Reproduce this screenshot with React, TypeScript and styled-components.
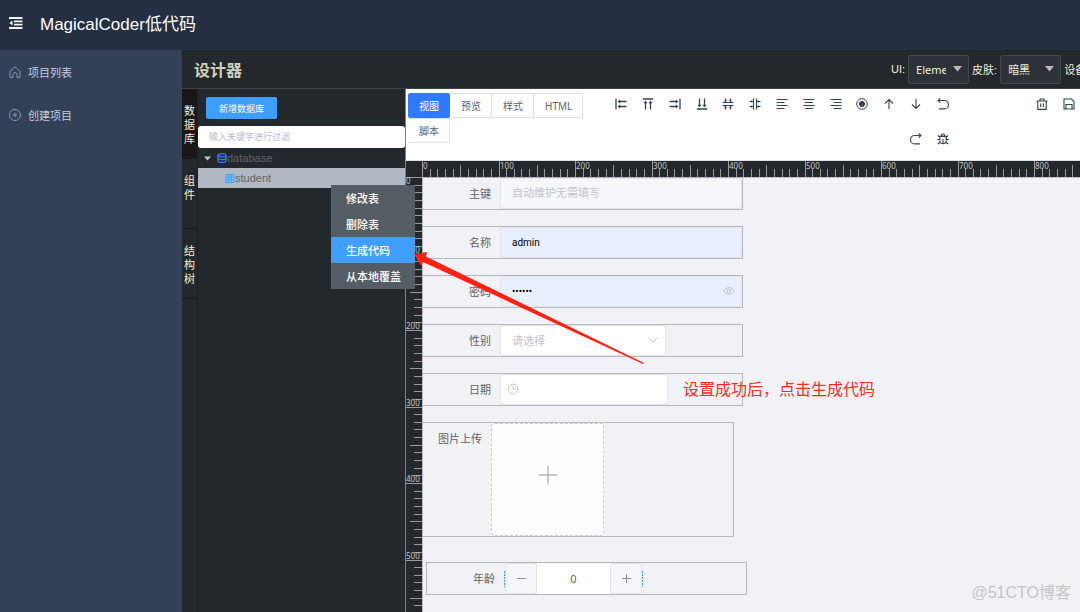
import React, { useEffect, useRef, useState } from "react";
import styled, { createGlobalStyle } from "styled-components";

const RULER_STEP = 76.5 / 10;

const GlobalStyle = createGlobalStyle`
  *, *::before, *::after { box-sizing: border-box; }
  body {
    margin: 0;
    background: #f1f2f6;
    font-family: "Liberation Sans", "Noto Sans CJK SC", sans-serif;
    font-size: 11px;
  }
  button, input, select { font: inherit; margin: 0; }
`;

const Page = styled.div`
  display: flex;
  flex-direction: column;
  min-height: 100vh;
  overflow: hidden;
`;

const TopBar = styled.header`
  display: flex;
  align-items: center;
  gap: 17px;
  height: 50px;
  padding: 0 9px 4px;
  background: #242f42;
  color: #fff;
`;

const Brand = styled.h1`
  margin: 0;
  padding-top: 3px;
  font-size: 17px;
  font-weight: 400;
  line-height: 24px;
`;

const FoldButton = styled.button`
  display: flex;
  padding: 0;
  border: 0;
  background: none;
  color: #f4f4ee;
`;

const Body = styled.div`
  display: flex;
  flex: 1;
`;

const Sidebar = styled.nav`
  flex: 0 0 182px;
  background: #324157;
`;

const NavLink = styled.a`
  display: flex;
  align-items: center;
  gap: 7px;
  height: 43px;
  padding-left: 9px;
  color: #c4cddb;
  text-decoration: none;
  svg { color: #8a94a2; }
`;

const Designer = styled.main`
  display: flex;
  flex: 1;
  flex-direction: column;
  min-width: 0;
  background: #23282c;
`;

const DesignerBar = styled.div`
  display: flex;
  align-items: center;
  height: 39px;
  padding-left: 12px;
  border-bottom: 1px solid #3c4246;
`;

const DesignerTitle = styled.h2`
  flex: 1;
  margin: 0;
  color: #cfd0bb;
  font-size: 16px;
  font-weight: 700;
`;

const Settings = styled.div`
  display: flex;
  flex: 0 0 189px;
  align-items: center;
  gap: 3px;
  overflow: hidden;
  color: #f0efdc;
  white-space: nowrap;
  label { flex: none; }
`;

const PickerBox = styled.span`
  display: flex;
  position: relative;
  flex: none;
  svg {
    position: absolute;
    top: 11px;
    right: 7px;
    pointer-events: none;
  }
`;

const Picker = styled.select`
  appearance: none;
  width: 61px;
  height: 29px;
  padding: 0 22px 0 7px;
  border: 1px solid #43484d;
  border-radius: 2px;
  background: #2d3238;
  color: #f0efdc;
  font-family: "Noto Sans", "Noto Sans CJK SC", sans-serif;
`;

const Workspace = styled.div`
  display: flex;
  flex: 1;
  position: relative;
`;

const SideTabs = styled.div`
  flex: 0 0 16px;
  border-right: 1px solid #1c2023;
`;

const SideTab = styled.button<{ $active?: boolean }>`
  display: flex;
  align-items: flex-start;
  width: 100%;
  height: 70px;
  padding: 15px 2px 0;
  border: 0;
  border-bottom: 1px solid #191c1f;
  background: ${(p) => (p.$active ? "#191717" : "transparent")};
  color: #f0efdc;
  line-height: 14px;
  word-break: break-all;
`;

const Panel = styled.section`
  flex: 0 0 208px;
  border-right: 1px solid #7d8386;
`;

const AddButton = styled.button`
  display: block;
  height: 22px;
  margin: 8px 0 7px 8px;
  padding: 0 13px;
  border: 0;
  border-radius: 2px;
  background: #409eff;
  color: #fff;
  font-size: 9px;
`;

const FilterInput = styled.input`
  display: block;
  width: 100%;
  height: 22px;
  padding: 0 11px;
  border: 0;
  border-radius: 3px;
  background: #fff;
  font-size: 9px;
  &::placeholder { color: #b9bdc6; }
`;

const Tree = styled.ul`
  margin: 0;
  padding: 0;
  list-style: none;
`;

const TreeRow = styled.li<{ $selected?: boolean }>`
  display: flex;
  position: relative;
  align-items: center;
  height: 20px;
  padding-left: ${(p) => (p.$selected ? 27 : 6)}px;
  background: ${(p) => (p.$selected ? "#b0b8c1" : "transparent")};
  color: #606468;
  svg { flex: none; }
`;

const Caret = styled.svg`
  margin-right: 6px;
`;

const Menu = styled.div`
  position: absolute;
  z-index: 2;
  top: 17px;
  left: 133px;
  width: 84px;
  background: #545c64;
`;

const MenuItem = styled.button<{ $active?: boolean }>`
  display: block;
  width: 100%;
  height: 26px;
  padding: 0 0 0 15px;
  border: 0;
  background: ${(p) => (p.$active ? "#409eff" : "transparent")};
  color: #fff;
  font-weight: 500;
  text-align: left;
  white-space: nowrap;
`;

const Stage = styled.section`
  display: flex;
  flex: 1;
  flex-direction: column;
  min-width: 0;
`;

const Toolbar = styled.div`
  display: flex;
  align-items: flex-start;
  height: 72px;
  padding: 4px 0 0 2px;
  overflow: hidden;
  border-bottom: 1px solid #dfe2e6;
  background: #fff;
  color: #304455;
`;

const ViewTabs = styled.div`
  display: flex;
  flex: 0 0 180px;
  flex-wrap: wrap;
`;

const ViewTab = styled.button<{ $active?: boolean }>`
  height: 25px;
  padding: 0 10px 0 ${(p) => (p.$active ? 10 : 11)}px;
  border: 1px solid ${(p) => (p.$active ? "#2f7bff" : "#dcdfe6")};
  border-left-width: ${(p) => (p.$active ? 1 : 0)}px;
  border-radius: ${(p) => (p.$active ? 2 : 0)}px;
  background: ${(p) => (p.$active ? "#2f7bff" : "#fff")};
  color: ${(p) => (p.$active ? "#fff" : "#606266")};
  font-family: "Noto Sans", "Noto Sans CJK SC", sans-serif;
  font-size: 10px;
`;

const ToolGrid = styled.div`
  display: grid;
  flex: 0 0 348px;
  grid-template-columns: repeat(13, 1fr);
  grid-auto-rows: 22px;
  row-gap: 13px;
  margin-left: auto;
`;

const ToolButton = styled.button<{ $column?: number }>`
  display: flex;
  grid-column-start: ${(p) => p.$column ?? "auto"};
  align-items: center;
  justify-content: center;
  height: 22px;
  padding: 0;
  border: 0;
  background: none;
  color: inherit;
`;

const FileTools = styled.div`
  display: grid;
  grid-template-columns: 27px 27px;
  margin: 0 -2px 0 72px;
`;

const Board = styled.div`
  display: grid;
  flex: 1;
  grid-template-columns: 16px minmax(0, 1fr);
  grid-template-rows: 16px 1fr;
`;

const RulerSvg = styled.svg`
  display: block;
  width: 100%;
  height: 100%;
  overflow: hidden;
  background: #23282c;
  text {
    fill: #c2c5c6;
    font-family: "Noto Sans", sans-serif;
    font-size: 8px;
  }
`;

const RulerBox = styled.div`
  height: 0;
  min-width: 0;
  min-height: 100%;
  overflow: hidden;
`;

const Canvas = styled.form`
  display: flex;
  flex-direction: column;
  align-items: flex-start;
  padding-bottom: 16px;
  background: #f1f2f6;
  box-shadow: inset 1px 1px 0 #c9b9bd;
  color: #606266;
`;

const Field = styled.div<{ $variant?: "upload" | "number" }>`
  display: flex;
  width: ${(p) => (p.$variant === "upload" ? 312 : 321)}px;
  max-width: 100%;
  height: ${(p) => (p.$variant === "upload" ? 115 : 33)}px;
  margin-bottom: ${(p) => (p.$variant === "upload" ? 25 : p.$variant === "number" ? 0 : 16)}px;
  margin-left: ${(p) => (p.$variant === "number" ? 4 : 0)}px;
  border: 1px solid #b5b7ba;
`;

const FieldLabel = styled.label<{ $narrow?: boolean }>`
  flex: 0 0 ${(p) => (p.$narrow ? 68 : 77)}px;
  padding-right: ${(p) => (p.$narrow ? 9 : 9)}px;
  line-height: 32px;
  text-align: right;
`;

const Control = styled.div<{ $width?: number }>`
  display: flex;
  position: relative;
  flex: ${(p) => (p.$width ? `0 0 ${p.$width}px` : 1)};
  > svg {
    position: absolute;
    top: 9px;
    pointer-events: none;
    color: #c0c4cc;
  }
`;

const TextInput = styled.input<{ $tone: string }>`
  width: 100%;
  min-width: 0;
  padding: 0 11px;
  border: 1px solid #e1e4ea;
  border-radius: 3px;
  background: ${(p) => p.$tone};
  color: #000;
  font-family: Roboto, "Noto Sans CJK SC", sans-serif;
  font-size: 10px;
  &::placeholder {
    color: #c0c4cc;
    font-size: 11px;
  }
`;

const ChoiceInput = styled.select`
  appearance: none;
  width: 100%;
  padding: 0 11px;
  border: 1px solid #e4e7ed;
  border-radius: 3px;
  background: #fff;
  color: #c0c4cc;
`;

const UploadButton = styled.button`
  display: flex;
  align-items: center;
  justify-content: center;
  width: 113px;
  padding: 0 0 9px;
  border: 1px dashed #c6cad2;
  border-radius: 4px;
  background: #fdfdfe;
  color: #8c939d;
`;

const Stepper = styled.div`
  display: flex;
  flex: none;
  padding: 0 1px;
  background: repeating-linear-gradient(#409eff 0 2px, transparent 2px 3px) center / 100% 16px no-repeat;
`;

const StepButton = styled.button`
  display: flex;
  flex: 0 0 32px;
  align-items: center;
  justify-content: center;
  padding: 0;
  border: 1px solid #e1e4ea;
  border-radius: 3px;
  background: #f5f7fa;
  color: #8b9098;
`;

const StepInput = styled.input`
  width: 73px;
  padding: 0;
  border: 0;
  background: #fff;
  color: #606266;
  font-family: "Noto Sans", sans-serif;
  text-align: center;
`;

const Note = styled.p`
  position: absolute;
  z-index: 3;
  top: 289px;
  left: 501px;
  margin: 0;
  color: #ff2a1c;
  font-size: 16px;
  line-height: 24px;
  white-space: nowrap;
`;

const Arrow = styled.svg`
  position: absolute;
  z-index: 3;
  top: 161px;
  left: 231px;
  pointer-events: none;
`;

const Watermark = styled.span`
  position: absolute;
  right: 9px;
  bottom: 7px;
  color: #c3c5c9;
  font-size: 16px;
  line-height: 24px;
`;

function Glyph({ size = 12, turn = 0, children }: { size?: number; turn?: number; children: React.ReactNode }) {
  return (
    <svg width={size} height={size} viewBox="0 0 12 12" fill="none" stroke="currentColor" strokeWidth="1" aria-hidden="true">
      <g transform={`rotate(${turn} 6 6)`}>{children}</g>
    </svg>
  );
}

const alignEdge = (
  <>
    <path d="M1 .8v10.4M4 3.5h7.5M4 8.5h7.5" strokeWidth="1.3" />
    <path d="M2.6 3.5l2.6-2v4zM2.6 8.5l2.6-2v4z" fill="currentColor" stroke="none" />
  </>
);
const alignMiddle = (
  <>
    <path d="M.5 4.5h11M.5 7.5h11" strokeWidth="1.1" />
    <path d="M3.5 .5v3M8.5 .5v3M3.5 8.5v3M8.5 8.5v3" />
    <path d="M1.9 2.3h3.2l-1.6 2zM6.9 2.3h3.2l-1.6 2zM1.9 9.7h3.2l-1.6-2zM6.9 9.7h3.2l-1.6-2z" fill="currentColor" stroke="none" />
  </>
);

const tools: { name: string; turn?: number; column?: number; art: React.ReactNode }[] = [
  { name: "左对齐", art: alignEdge },
  { name: "上对齐", turn: 90, art: alignEdge },
  { name: "右对齐", turn: 180, art: alignEdge },
  { name: "下对齐", turn: 270, art: alignEdge },
  { name: "垂直居中", art: alignMiddle },
  { name: "水平居中", turn: 90, art: alignMiddle },
  { name: "文字居左", art: <path d="M.5 1.5h11M.5 4.5h8M.5 7.5h11M.5 10.5h8" /> },
  { name: "文字居中", art: <path d="M.5 1.5h11M2 4.5h8M.5 7.5h11M2 10.5h8" /> },
  { name: "文字居右", art: <path d="M.5 1.5h11M3.5 4.5h8M.5 7.5h11M3.5 10.5h8" /> },
  { name: "选中", art: <><circle cx="6" cy="6" r="5.3" /><circle cx="6" cy="6" r="3" fill="currentColor" stroke="none" /></> },
  { name: "上移", art: <path d="M6 11V1.5M2 5.5l4-4 4 4" strokeWidth="1.1" /> },
  { name: "下移", art: <path d="M6 1v9.5M2 6.5l4 4 4-4" strokeWidth="1.1" /> },
  { name: "撤销", art: <path d="M3.2 .3L1 2.5l2.2 2.2M1 2.5h6.3a4.2 4.2 0 0 1 0 8.400H2" strokeWidth="1.1" /> },
  { name: "重做", column: 12, art: <path d="M8.8 .3L11 2.5 8.8 4.700M11 2.5H4.700a4.2 4.2 0 0 0 0 8.400h5.3" strokeWidth="1.1" /> },
  { name: "调试", column: 13, art: <path d="M4 3a2 2 0 0 1 4 0zM2.8 3.5h6.4v4a3.2 3.2 0 0 1-6.4 0zM6 6v4.5M.3 6.5h2.5M9.2 6.5h2.5M.8 2.5l2 1.5M11.2 2.5L9.2 4M.8 11l2.3-1.8M11.2 11L8.9 9.2" strokeWidth="1.1" /> },
];

function Ruler({ vertical = false }: { vertical?: boolean }) {
  const box = useRef<HTMLDivElement>(null);
  const [length, setLength] = useState(0);

  useEffect(() => {
    const node = box.current;
    if (!node) return;
    const measure = () => setLength(vertical ? node.clientHeight : node.clientWidth);
    measure();
    const observer = new ResizeObserver(measure);
    observer.observe(node);
    return () => observer.disconnect();
  }, [vertical]);

  const marks = Array.from({ length: Math.ceil(length / RULER_STEP) }, (_, i) => ({
    at: Math.round(i * RULER_STEP),
    start: i % 10 === 0 ? 0 : i % 5 === 0 ? 4 : 8,
    label: i * 10,
  }));
  const path = marks
    .map(({ at, start }) => (vertical ? `M${start} ${at + 0.5}H16` : `M${at + 0.5} ${start}V16`))
    .join("");

  return (
    <RulerBox ref={box}>
      <RulerSvg aria-hidden="true">
        <path d={path} stroke="#989c9e" />
        {marks
          .filter((m) => m.label % 100 === 0 && m.at + 16 < length)
          .map((m) => (
            <text key={m.label} x={vertical ? 0 : m.at + 1} y={vertical ? (m.at ? m.at - 1 : 7) : 8}>
              {m.label}
            </text>
          ))}
      </RulerSvg>
    </RulerBox>
  );
}

const down = (
  <svg width="9" height="6" viewBox="0 0 9 6" aria-hidden="true">
    <path d="M0 0h9L4.5 5.5z" fill="#b9babb" />
  </svg>
);

export default function App() {
  const [age, setAge] = useState(0);
  return (
    <Page>
      <GlobalStyle />
      <TopBar>
        <FoldButton aria-label="折叠菜单">
          <svg width="14" height="12" viewBox="0 0 14 12" fill="none" stroke="currentColor" strokeWidth="1.8">
            <path d="M0 1h13.5M5 4.3h8.5M5 7.6h8.5M0 11h13.5" />
            <path d="M.3 6l3.2-2.4v4.8z" fill="currentColor" stroke="none" />
          </svg>
        </FoldButton>
        <Brand>MagicalCoder低代码</Brand>
      </TopBar>
      <Body>
        <Sidebar>
          <NavLink href="#projects">
            <Glyph><path d="M1 5.2L6 .8l5 4.4V11.4H8V8.5a2 2 0 0 0-4 0v2.9H1z" /></Glyph>
            项目列表
          </NavLink>
          <NavLink href="#create">
            <Glyph><circle cx="6" cy="6" r="5.5" /><path d="M6 3.5v5M3.5 6h5" /></Glyph>
            创建项目
          </NavLink>
        </Sidebar>
        <Designer>
          <DesignerBar>
            <DesignerTitle>设计器</DesignerTitle>
            <Settings>
              <label htmlFor="ui">UI:</label>
              <PickerBox>
                <Picker id="ui"><option>Element UI</option></Picker>
                {down}
              </PickerBox>
              <label htmlFor="skin">皮肤:</label>
              <PickerBox>
                <Picker id="skin"><option>暗黑</option></Picker>
                {down}
              </PickerBox>
              <span>设备</span>
            </Settings>
          </DesignerBar>
          <Workspace>
            <SideTabs>
              <SideTab $active>数据库</SideTab>
              <SideTab>组件</SideTab>
              <SideTab>结构树</SideTab>
            </SideTabs>
            <Panel>
              <AddButton>新增数据库</AddButton>
              <FilterInput aria-label="过滤" placeholder="输入关键字进行过滤" />
              <Tree>
                <TreeRow>
                  <Caret width="7" height="5" viewBox="0 0 7 5"><path d="M0 .5h7L3.5 4.5z" fill="#c0c4cc" /></Caret>
                  <svg width="10" height="10" viewBox="0 0 10 10" fill="none" stroke="#2f7bff" strokeWidth="1.3">
                    <ellipse cx="5" cy="2.3" rx="4" ry="1.6" />
                    <path d="M1 2.3v5.4c0 2.2 8 2.2 8 0V2.3M1 5c0 2.2 8 2.2 8 0" />
                  </svg>
                  database
                </TreeRow>
                <TreeRow $selected>
                  <svg width="10" height="9" viewBox="0 0 10 9" fill="#8fc4fb" stroke="#409eff">
                    <path d="M1 .5h8v8H1zM1 3.2h8M1 5.8h8M3.7 .5v8M6.3 .5v8" />
                  </svg>
                  student
                  <Menu>
                    <MenuItem>修改表</MenuItem>
                    <MenuItem>删除表</MenuItem>
                    <MenuItem $active>生成代码</MenuItem>
                    <MenuItem>从本地覆盖</MenuItem>
                  </Menu>
                </TreeRow>
              </Tree>
            </Panel>
            <Stage>
              <Toolbar>
                <ViewTabs>
                  <ViewTab $active>视图</ViewTab>
                  <ViewTab>预览</ViewTab>
                  <ViewTab>样式</ViewTab>
                  <ViewTab>HTML</ViewTab>
                  <ViewTab>脚本</ViewTab>
                </ViewTabs>
                <ToolGrid>
                  {tools.map((t) => (
                    <ToolButton key={t.name} $column={t.column} aria-label={t.name}>
                      <Glyph turn={t.turn}>{t.art}</Glyph>
                    </ToolButton>
                  ))}
                </ToolGrid>
                <FileTools>
                  <ToolButton aria-label="删除">
                    <Glyph><path d="M.5 3h11M4 3V1h4v2M1.8 3v8.4h8.4V3M4.7 5.5v3.5M7.3 5.5v3.5" strokeWidth="1.1" /></Glyph>
                  </ToolButton>
                  <ToolButton aria-label="保存">
                    <Glyph><path d="M1 1h7.5L11 3.5V11H1zM3 11V6.5h6V11" strokeWidth="1.1" /></Glyph>
                  </ToolButton>
                </FileTools>
              </Toolbar>
              <Board>
                <RulerSvg aria-hidden="true" />
                <Ruler />
                <Ruler vertical />
                <Canvas onSubmit={(e) => e.preventDefault()}>
                  <Field>
                    <FieldLabel htmlFor="key">主键</FieldLabel>
                    <Control><TextInput id="key" $tone="#f5f7fa" placeholder="自动维护无需填写" disabled /></Control>
                  </Field>
                  <Field>
                    <FieldLabel htmlFor="name">名称</FieldLabel>
                    <Control><TextInput id="name" $tone="#e8f0fe" defaultValue="admin" /></Control>
                  </Field>
                  <Field>
                    <FieldLabel htmlFor="password">密码</FieldLabel>
                    <Control>
                      <TextInput id="password" type="password" $tone="#e8f0fe" defaultValue="123456" />
                      <svg width="12" height="12" viewBox="0 0 12 12" fill="none" stroke="currentColor" style={{ right: 7 }}>
                        <path d="M.8 6C3.2 1.5 8.8 1.5 11.2 6 8.8 10.5 3.2 10.5 .8 6z" />
                        <circle cx="6" cy="6" r="1.8" />
                      </svg>
                    </Control>
                  </Field>
                  <Field>
                    <FieldLabel htmlFor="gender">性别</FieldLabel>
                    <Control $width={166}>
                      <ChoiceInput id="gender"><option>请选择</option></ChoiceInput>
                      <svg width="12" height="12" viewBox="0 0 12 12" fill="none" stroke="currentColor" style={{ right: 7 }}>
                        <path d="M2 4l4 4 4-4" />
                      </svg>
                    </Control>
                  </Field>
                  <Field>
                    <FieldLabel htmlFor="date">日期</FieldLabel>
                    <Control $width={168}>
                      <TextInput id="date" $tone="#fff" />
                      <svg width="12" height="12" viewBox="0 0 12 12" fill="none" stroke="currentColor" style={{ left: 7 }}>
                        <circle cx="6" cy="6" r="4.8" />
                        <path d="M6 3v3.2h2.8" />
                      </svg>
                    </Control>
                  </Field>
                  <Field $variant="upload">
                    <FieldLabel $narrow htmlFor="upload">图片上传</FieldLabel>
                    <UploadButton id="upload" type="button" aria-label="图片上传">
                      <svg width="18" height="18" viewBox="0 0 18 18" stroke="currentColor"><path d="M9 0v18M0 9h18" /></svg>
                    </UploadButton>
                  </Field>
                  <Field $variant="number">
                    <FieldLabel htmlFor="age">年龄</FieldLabel>
                    <Stepper>
                      <StepButton type="button" aria-label="减少" onClick={() => setAge(age - 1)}>
                        <svg width="9" height="9" viewBox="0 0 9 9" stroke="currentColor"><path d="M0 4.5h9" /></svg>
                      </StepButton>
                      <StepInput id="age" value={age} onChange={(e) => setAge(Number(e.target.value) || 0)} />
                      <StepButton type="button" aria-label="增加" onClick={() => setAge(age + 1)}>
                        <svg width="9" height="9" viewBox="0 0 9 9" stroke="currentColor"><path d="M0 4.5h9M4.5 0v9" /></svg>
                      </StepButton>
                    </Stepper>
                  </Field>
                </Canvas>
              </Board>
            </Stage>
            <Arrow width="232" height="114" viewBox="0 0 232 114" aria-hidden="true">
              <path d="M1 4l13-2-1 4.5L231 113l-1 1L10 12l-2 4z" fill="#ff2112" />
            </Arrow>
            <Note>设置成功后，点击生成代码</Note>
            <Watermark>@51CTO博客</Watermark>
          </Workspace>
        </Designer>
      </Body>
    </Page>
  );
}
